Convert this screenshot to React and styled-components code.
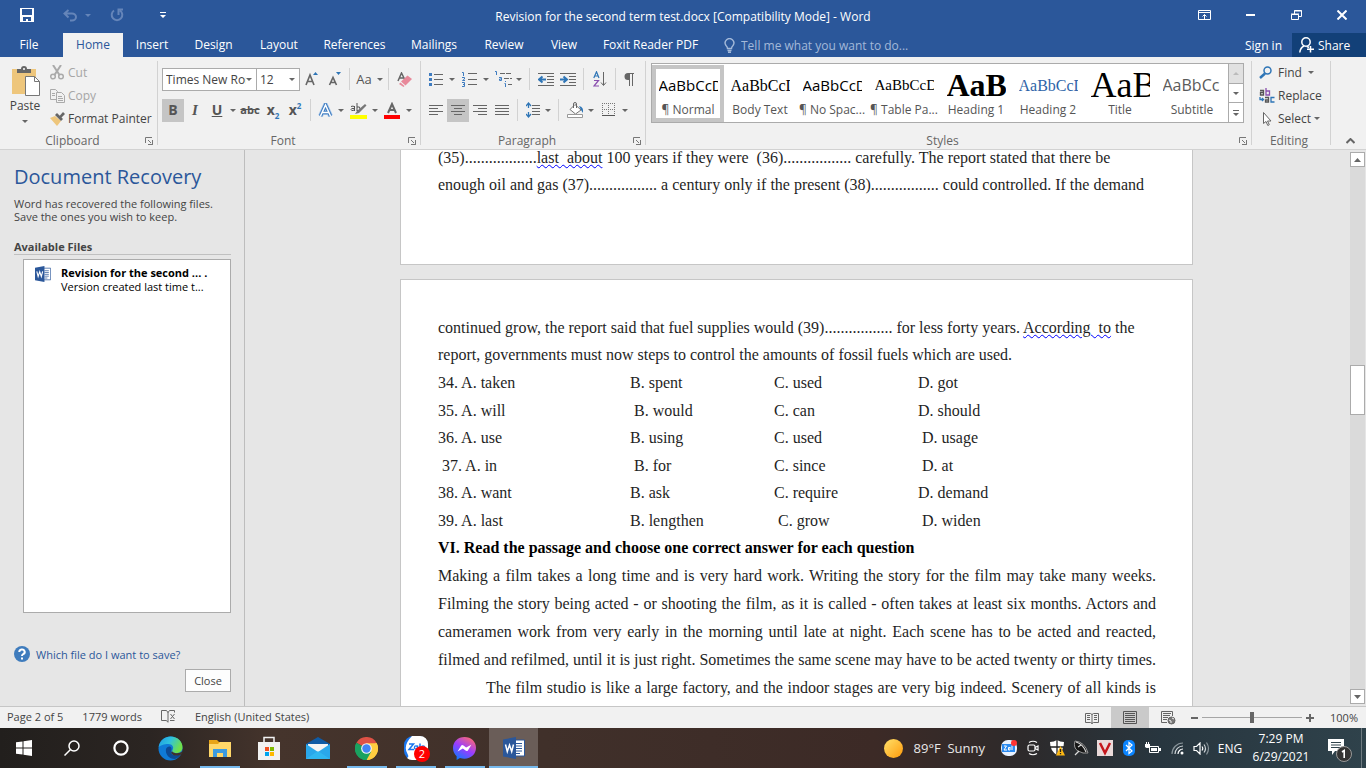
import { useState } from "react";
import styled, { createGlobalStyle, css } from "styled-components";

const GlobalStyle = createGlobalStyle`
  * {
    box-sizing: border-box;
  }
  body {
    margin: 0;
    font-family: "Open Sans", "Noto Sans", sans-serif;
    font-size: 12px;
    color: #444;
  }
  button, input, select {
    font-family: inherit;
    font-size: inherit;
    color: inherit;
  }
  button {
    border: none;
    background: none;
    padding: 0;
  }
  p, h1, h2, h3 {
    margin: 0;
    font-size: inherit;
    font-weight: 400;
  }
  svg {
    display: block;
    flex: none;
  }
`;

const Shell = styled.div`
  height: 100vh;
  display: flex;
  flex-direction: column;
  overflow: hidden;
  background: #e6e6e6;
`;

/* ---------- title bar ---------- */

const TitleBar = styled.header`
  height: 33px;
  display: grid;
  grid-template-columns: 1fr auto 1fr;
  align-items: start;
  background: #2b579a;
  color: #fff;
`;

const QuickAccess = styled.div`
  display: flex;
  align-items: center;
  padding-left: 16px;
  height: 30px;
`;

const QuickButton = styled.button`
  width: ${(props) => props.$w || 22}px;
  height: 24px;
  margin-left: ${(props) => props.$gap || 0}px;
  display: flex;
  align-items: center;
  justify-content: center;
  color: ${(props) => (props.disabled ? "#6585b9" : "#fff")};
`;

const DocTitle = styled.h1`
  line-height: 33px;
  white-space: nowrap;
`;

const WindowButtons = styled.div`
  display: flex;
  justify-content: flex-end;
  padding-right: 1px;
`;

const WindowButton = styled.button`
  width: 46px;
  height: 30px;
  display: flex;
  align-items: center;
  justify-content: center;
  color: #fff;
`;

/* ---------- tabs ---------- */

const TabBar = styled.nav`
  height: 24px;
  display: flex;
  background: #2b579a;
  color: #fff;
`;

const Tab = styled.button`
  width: ${(props) => props.$w}px;
  height: 24px;
  line-height: 24px;
  color: ${(props) => (props.$active ? "#2b579a" : "#fff")};
  background: ${(props) => (props.$active ? "#f1f1f1" : "transparent")};
  margin-left: ${(props) => (props.$active ? 5 : 0)}px;
  white-space: nowrap;
`;

const TellMe = styled.label`
  display: flex;
  align-items: center;
  gap: 6px;
  padding-left: 14px;
  flex: 1;
  color: #a3b9d9;
  input {
    width: 180px;
    border: none;
    padding: 0;
    background: transparent;
    outline: none;
  }
  input::placeholder {
    color: #a3b9d9;
    opacity: 1;
  }
`;

const SignIn = styled.button`
  padding: 0 10px;
  color: #fff;
`;

const Share = styled.button`
  width: 74px;
  display: flex;
  align-items: center;
  gap: 4px;
  padding-left: 7px;
  background: #124078;
  color: #fff;
`;

/* ---------- ribbon ---------- */

const Ribbon = styled.section`
  height: 93px;
  display: flex;
  padding: 4px 0;
  background: #f1f1f1;
  border-bottom: 1px solid #d2d2d2;
`;

const Group = styled.div`
  width: ${(props) => (props.$w ? `${props.$w}px` : "auto")};
  flex: ${(props) => (props.$grow ? "1" : "none")};
  min-width: 0;
  display: flex;
  flex-direction: column;
  border-right: 1px solid #d2d2d2;
`;

const GroupBody = styled.div`
  flex: 1;
  display: flex;
  flex-direction: ${(props) => (props.$column ? "column" : "row")};
  align-items: flex-start;
  gap: ${(props) => (props.$column ? 7 : 0)}px;
  padding: ${(props) => props.$pad || "6px 4px 0"};
`;

const GroupFooter = styled.div`
  height: 8px;
  line-height: 8px;
  display: flex;
  align-items: center;
  padding-right: 4px;
  color: #666;
  span {
    flex: 1;
    text-align: center;
  }
`;

const Row = styled.div`
  height: 24px;
  display: flex;
  align-items: center;
`;

const Tool = styled.button`
  width: ${(props) => props.$w || 22}px;
  height: 23px;
  display: flex;
  align-items: center;
  justify-content: center;
  background: ${(props) => (props.$on ? "#c5c5c5" : "transparent")};
`;

const Rule = styled.span`
  width: ${(props) => props.$w || 10}px;
  height: 22px;
  display: flex;
  justify-content: center;
  &::before {
    content: "";
    width: 1px;
    background: #d2d2d2;
  }
`;

const Combo = styled.label`
  width: ${(props) => props.$w}px;
  height: 23px;
  display: flex;
  align-items: center;
  padding: 0 4px 0 3px;
  background: #fff;
  border: 1px solid #ababab;
  & + & {
    border-left: none;
  }
  select {
    flex: 1;
    min-width: 0;
    appearance: none;
    border: none;
    padding: 0;
    background: transparent;
    outline: none;
    text-overflow: clip;
  }
`;

const PasteButton = styled.button`
  width: 50px;
  padding-top: 4px;
  display: flex;
  flex-direction: column;
  align-items: center;
  span {
    line-height: 18px;
    margin: 1px 0 5px;
  }
`;

const Stack = styled.div`
  display: flex;
  flex-direction: column;
`;

const TextTool = styled.button`
  height: 23px;
  display: flex;
  align-items: center;
  gap: ${(props) => props.$gap || 3}px;
  color: ${(props) => (props.disabled ? "#a6a6a6" : "#444")};
  white-space: nowrap;
`;

const Glyph = styled.span`
  line-height: 20px;
  color: #555;
  font-size: ${(props) => props.$size || 14}px;
  font-weight: ${(props) => (props.$bold ? 700 : 400)};
  font-style: ${(props) => (props.$italic ? "italic" : "normal")};
  font-family: ${(props) => (props.$serif ? '"Liberation Serif", serif' : "inherit")};
  text-decoration: ${(props) => props.$line || "none"};
  sub, sup {
    font-size: 8px;
    line-height: 0;
    color: #2e75b6;
  }
`;

const Gallery = styled.div`
  flex: 1;
  min-width: 0;
  height: 60px;
  display: flex;
  background: #fff;
  border: 1px solid #ababab;
`;

const StyleList = styled.div`
  flex: 1;
  min-width: 0;
  display: flex;
  padding-top: 1px;
  overflow: hidden;
`;

const StyleItem = styled.button`
  flex: 1;
  min-width: 0;
  height: 57px;
  border: 4px solid ${(props) => (props.$on ? "#c5c5c5" : "transparent")};
  display: flex;
  flex-direction: column;
  align-items: center;
  color: #555;
`;

const StyleName = styled.span`
  line-height: 16px;
  white-space: nowrap;
`;

const Preview = styled.span`
  width: 59px;
  height: 33px;
  flex: none;
  line-height: 33px;
  overflow: hidden;
  text-align: left;
  white-space: nowrap;
  font-family: ${(props) => (props.$sans ? '"Open Sans", sans-serif' : '"Liberation Serif", serif')};
  font-size: ${(props) => props.$size}px;
  font-weight: ${(props) => (props.$bold ? 700 : 400)};
  color: ${(props) => props.$color || "#000"};
`;

const GalleryArrows = styled.div`
  width: 15px;
  display: flex;
  flex-direction: column;
  border-left: 1px solid #ababab;
  button {
    flex: 1;
    display: flex;
    align-items: center;
    justify-content: center;
  }
  button + button {
    border-top: 1px solid #ababab;
  }
  button:disabled {
    background: #e1e1e1;
  }
`;

const Collapse = styled.button`
  width: 35px;
  align-self: flex-end;
  height: 8px;
  display: flex;
  align-items: center;
  justify-content: center;
  padding-left: 4px;
`;

/* ---------- workspace ---------- */

const Workspace = styled.main`
  flex: 1;
  min-height: 0;
  display: flex;
`;

const RecoveryPane = styled.aside`
  width: 245px;
  display: flex;
  flex-direction: column;
  padding: 13px 13px 14px 14px;
  border-right: 1px solid #bdbdbd;
  font-size: 11px;
  line-height: 13px;
`;

const PaneTitle = styled.h2`
  font-size: 20px;
  line-height: 28px;
  color: #2b579a;
  margin-bottom: 6px;
`;

const PaneLabel = styled.h3`
  margin-top: 17px;
  font-weight: 700;
  line-height: 14px;
  border-bottom: 1px solid #c0c0c0;
`;

const FileList = styled.ul`
  flex: 1;
  margin: 4px 0 0 9px;
  padding: 6px 0 0 11px;
  list-style: none;
  background: #fff;
  border: 1px solid #ababab;
`;

const FileItem = styled.li`
  display: flex;
  gap: 10px;
  line-height: 14px;
  color: #000;
  white-space: nowrap;
  overflow: hidden;
  strong, span {
    display: block;
  }
`;

const HelpLink = styled.a`
  display: flex;
  align-items: center;
  gap: 6px;
  height: 18px;
  margin-top: 32px;
  color: #2b579a;
  text-decoration: none;
`;

const CloseButton = styled.button`
  align-self: flex-end;
  width: 46px;
  height: 23px;
  margin-top: 6px;
  background: #fdfdfd;
  border: 1px solid #ababab;
`;

const Canvas = styled.div`
  flex: 1;
  min-width: 0;
  display: flex;
  flex-direction: column;
  align-items: center;
  gap: 14px;
  padding-right: 2px;
  overflow: hidden;
  font-family: "Liberation Serif", "Times New Roman", serif;
  font-size: 16px;
  line-height: 27px;
  color: #1f1f1f;
`;

const Paper = styled.article`
  width: 793px;
  max-width: 100%;
  flex: none;
  background: #fff;
  border: 1px solid #c6c6c6;
  padding: ${(props) => props.$pad};
  margin-top: ${(props) => (props.$scrolled ? -7 : 0)}px;
`;

const Line = styled.p`
  white-space: pre;
`;

const Grammar = styled.span`
  text-decoration: underline wavy #00f 1px;
  text-underline-offset: 1px;
`;

const Answers = styled.div`
  padding-top: 1px;
`;

const AnswerRow = styled.div`
  display: grid;
  grid-template-columns: 192px 144px 144px 1fr;
  white-space: pre;
  line-height: 28px;
  &:nth-child(even) {
    line-height: 27px;
  }
`;

const SectionTitle = styled.h3`
  font-weight: 700;
  line-height: 28px;
  color: #000;
`;

const Justified = styled.p`
  line-height: 28px;
  text-align: justify;
  text-align-last: justify;
  padding-left: ${(props) => (props.$indent ? 48 : 0)}px;
`;

const ScrollBar = styled.div`
  width: 15px;
  margin: 2px 1px 2px 0;
  display: flex;
  flex-direction: column;
  background: #dadada;
  button {
    height: 15px;
    display: flex;
    align-items: center;
    justify-content: center;
    background: #fff;
    border: 1px solid #ababab;
  }
`;

const Track = styled.div`
  flex: 1;
  display: flex;
  flex-direction: column;
  &::before {
    content: "";
    flex: 198 0 0;
  }
  &::after {
    content: "";
    flex: 274 0 0;
  }
`;

const Thumb = styled.div`
  height: 50px;
  background: #fff;
  border: 1px solid #ababab;
`;

/* ---------- status bar ---------- */

const StatusBar = styled.footer`
  height: 22px;
  display: flex;
  align-items: center;
  background: #f1f1f1;
  border-top: 1px solid #c6c6c6;
  padding-left: 7px;
  font-size: 11px;
  line-height: 19px;
`;

const StatusText = styled.span`
  height: 21px;
  margin-right: 19px;
  white-space: nowrap;
  svg {
    margin-top: 3px;
  }
`;

const Spacer = styled.div`
  flex: 1;
`;

const ViewButton = styled.button`
  width: 38px;
  height: 21px;
  display: flex;
  align-items: center;
  justify-content: center;
  background: ${(props) => (props.$on ? "#cacaca" : "transparent")};
`;

const ZoomButton = styled.button`
  width: ${(props) => props.$w || 14}px;
  height: 20px;
  display: flex;
  align-items: center;
  justify-content: center;
`;

const ZoomRange = styled.input`
  appearance: none;
  width: 100px;
  height: 12px;
  margin: 0;
  background: linear-gradient(#a6a6a6, #a6a6a6) center / 100% 1px no-repeat;
  &::-webkit-slider-thumb {
    appearance: none;
    width: 4px;
    height: 11px;
    background: #666;
  }
`;

const ZoomText = styled.button`
  width: 49px;
  padding-left: 5px;
`;

/* ---------- taskbar ---------- */

const TaskBar = styled.footer`
  height: 40px;
  display: flex;
  align-items: stretch;
  color: #fff;
  background: linear-gradient(
    90deg,
    #221f1d 0%,
    #2b2522 11%,
    #45342c 20%,
    #40302a 40%,
    #3c2a26 64%,
    #2d2a2b 75%,
    #28363f 85%,
    #2f424b 100%
  );
`;

const Task = styled.button`
  width: ${(props) => props.$w || 49}px;
  display: flex;
  align-items: center;
  justify-content: center;
  position: relative;
  background: ${(props) => (props.$active ? "#6a5d58" : "transparent")};
  ${(props) =>
    props.$running &&
    css`
      &::after {
        content: "";
        position: absolute;
        bottom: 0;
        left: ${props.$active ? 0 : 5}px;
        right: ${props.$active ? 0 : 4}px;
        height: 2px;
        background: #76b9ed;
      }
    `}
`;

const Badge = styled.span`
  position: absolute;
  left: 23px;
  top: 18px;
  width: 16px;
  height: 16px;
  border-radius: 50%;
  background: #f00;
  color: #fff;
  font-size: 11px;
  line-height: 16px;
  text-align: center;
`;

const Weather = styled.button`
  display: flex;
  align-items: center;
  gap: 11px;
  margin-right: 12px;
  color: #e8e8e8;
  font-size: 13px;
  white-space: pre;
`;

const TrayButton = styled.button`
  width: 24px;
  display: flex;
  align-items: center;
  justify-content: center;
`;

const Lang = styled.button`
  width: 34px;
  color: #fff;
`;

const Clock = styled.time`
  width: 68px;
  padding-top: 2px;
  line-height: 18px;
  text-align: center;
  white-space: nowrap;
`;

const Notices = styled.button`
  width: 46px;
  display: flex;
  align-items: center;
  justify-content: center;
  padding: 4px 0 0 3px;
`;

const DesktopEdge = styled.div`
  width: 5px;
  border-left: 1px solid #6f7b81;
`;

/* ---------- drawings ---------- */

const Svg = ({ w = 16, h = 16, children, ...rest }) => (
  <svg width={w} height={h} viewBox={`0 0 ${w} ${h}`} fill="none" aria-hidden="true" {...rest}>
    {children}
  </svg>
);

const Down = ({ color = "#666" }) => (
  <Svg w={6} h={3}>
    <path d="M0 0h6L3 3z" fill={color} />
  </Svg>
);

const Caret = ({ w = 10, label }) => (
  <Tool $w={w} aria-label={label}>
    <Down />
  </Tool>
);

const Launcher = () => (
  <button aria-label="More options">
    <Svg w={8} h={8} stroke="#777">
      <path d="M.5 6V.5H7M3 3l3 3" />
      <path d="M7.500 3v4.500H3M7.500 5v2.500H5" />
    </Svg>
  </button>
);

const Lines = ({ rows }) => (
  <Svg w={14} h={11} stroke="#666">
    {rows.map(([a, b], i) => (
      <path key={i} d={`M${a} ${i * 3 + 0.5}H${b}`} />
    ))}
  </Svg>
);

const WordIcon = ({ size = 16 }) => (
  <svg width={size} height={size} viewBox="0 0 22 22" aria-hidden="true">
    <path d="M11 3h10.500v16H11z" fill="#fff" stroke="#2b579a" />
    <path d="M13 6.500h6M13 9h6M13 11.500h6M13 14h6M13 16.500h4" stroke="#2b579a" />
    <path d="M0 2.500L13 0v22L0 19.500z" fill="#2b579a" />
    <path d="M2.500 7.500l1.800 7 2.200-6.500 2.200 6.500 1.800-7" fill="none" stroke="#fff" strokeWidth="1.500" />
  </svg>
);

const SaveIcon = () => (
  <Svg w={14} h={14}>
    <path d="M0 0h14v14H0z" fill="#fff" />
    <path d="M2 1h10v6H2zM3 9h8v4H8v-2H6v2H3z" fill="#2b579a" />
  </Svg>
);

const UndoIcon = () => (
  <Svg w={15} h={13} stroke="currentColor" strokeWidth="2">
    <path d="M5.500 1L1.500 4.500l4 4M2 4.500h7a4 3.500 0 0 1 0 7H7" />
  </Svg>
);

const RedoIcon = () => (
  <Svg w={14} h={14} stroke="currentColor" strokeWidth="2">
    <path d="M4 2.500A5.300 5.300 0 1 0 10 2.500M8.500 7V1.500H13" />
  </Svg>
);

const PasteIcon = () => (
  <Svg w={29} h={31}>
    <path d="M1 4h24v25H1z" fill="#eec67c" />
    <path d="M6 8V4h4a3 3 0 0 1 6 0h4v4z" fill="#666" />
    <circle cx="13" cy="4" r="1" fill="#fff" />
    <path d="M14.500 11.500h9l5 5v14h-14z" fill="#fff" stroke="#777" />
    <path d="M23.500 11.500v5h5" stroke="#777" />
  </Svg>
);

const CutIcon = () => (
  <Svg w={15} h={15} stroke="#aaa" strokeWidth="1.500">
    <path d="M3 0l6.500 10M11 0L4.500 10" strokeWidth="2" />
    <circle cx="3" cy="11.500" r="2.300" />
    <circle cx="11" cy="11.500" r="2.300" />
  </Svg>
);

const CopyIcon = () => (
  <Svg w={15} h={14} stroke="#aaa">
    <path d="M.5.500h5l2 2v8h-7zM2 4.500h3M2 6.500h3" />
    <path d="M6.500 3.500h5l3 3v7h-8z" fill="#f1f1f1" />
    <path d="M8 7.500h4M8 9.500h5M8 11.500h5" />
  </Svg>
);

const PainterIcon = () => (
  <Svg w={15} h={14}>
    <path d="M0 6l5-2 6 5-4 5z" fill="#eec67c" />
    <path d="M5 3l2-2 6 6-2 2z" fill="#666" />
    <path d="M9.500 4l3.500-4 2 2-4 4z" fill="#666" />
  </Svg>
);

const EraserIcon = () => (
  <Svg w={15} h={15}>
    <path d="M1 9l3.500-8L8 8M2.500 6H7" stroke="#666" strokeWidth="1.500" />
    <path d="M10.500 3.500L15 7l-6.500 6.500L4 9.500z" fill="#e8899a" />
    <path d="M3.500 10.500l4 3.500-1 1L2 12z" fill="#e8899a" />
  </Svg>
);

const SizedA = ({ small }) => (
  <Svg w={14} h={14}>
    <path
      d={small ? "M1.500 13L5 5.500 8.500 13M2.800 10.500h4.500" : "M1 13L5 3l4 10M2.500 9.500h5"}
      stroke="#666"
      strokeWidth="1.600"
    />
    <path d={small ? "M8 0h5l-2.500 3z" : "M8 3h5l-2.500-3z"} fill="#2e75b6" />
  </Svg>
);

const EffectIcon = () => (
  <Svg w={15} h={15}>
    <path d="M2.500 13L7.500 2l5 11M4.500 9.500h6" stroke="#a9c8ea" strokeWidth="5" />
    <path d="M2.500 13L7.500 2l5 11M4.500 9.500h6" stroke="#3f7cc0" strokeWidth="3.500" />
    <path d="M2.500 13L7.500 2l5 11M4.500 9.500h6" stroke="#fff" strokeWidth="1.500" />
  </Svg>
);

const HighlightIcon = () => (
  <Svg w={17} h={17}>
    <path d="M4.500 4v5M1 4.500q3-1.500 3.500 1M4 6.500q-3-.5-3 1.200T4.500 8M7 1v8M7 5q3.500-1 3 2T7 8.500" stroke="#555" />
    <path d="M15 2l1.500 1.500L9 11l-4 1 2-3z" fill="#777" />
    <path d="M0 13h17v4H0z" fill="#ff0" />
  </Svg>
);

const FontColorIcon = () => (
  <Svg w={16} h={17}>
    <path d="M4 11l4-9 4 9M5.500 8h5" stroke="#666" strokeWidth="2" />
    <path d="M0 13h16v4H0z" fill="red" />
  </Svg>
);

const BulletsIcon = () => (
  <Svg w={14} h={15}>
    <path d="M5 2.500h9M5 7.500h9M5 12.500h9" stroke="#666" />
    <path d="M0 1h3v3H0zM0 6h3v3H0zM0 11h3v3H0z" fill="#3f7cc0" />
  </Svg>
);

const NumberingIcon = () => (
  <Svg w={15} h={16}>
    <path d="M6 2.500h9M6 8.500h9M6 13.500h9" stroke="#666" />
    <path d="M0 1.500h1.500V5M0 6.500h2.500v1.500L.5 9.500H3M0 11.500h2.500v4H0M1 13.500h1.500" stroke="#3f7cc0" />
  </Svg>
);

const MultiIcon = () => (
  <Svg w={17} h={16}>
    <path d="M5 2.500h11M9 7.500h8M13 13.500h4" stroke="#666" strokeDasharray="5 1" />
    <path d="M0 .500h1.500V4M4 6.500h2.500V9.500H4.500V8H6M10.500 10v1M9.500 12.500h1V16" stroke="#3f7cc0" />
  </Svg>
);

const IndentIcon = ({ out }) => (
  <Svg w={16} h={13}>
    <path d="M0 .500h16M9 3.500h7M9 6.500h7M9 9.500h7M0 12.500h16" stroke="#666" />
    <path d={out ? "M8 6.500H2M4.500 3.500L1 6.500l3.500 3" : "M0 6.500h6M3.500 3.500L7 6.500l-3.500 3"} stroke="#2e75b6" strokeWidth="2" />
  </Svg>
);

const SortIcon = () => (
  <Svg w={14} h={16}>
    <path d="M.8 7L3.500.8 6 7M1.500 5h4" stroke="#2e75b6" strokeWidth="1.200" />
    <path d="M1 9.500h4.500L1 15h5" stroke="#8a4fae" strokeWidth="1.200" />
    <path d="M10.500 1v13M8 11.500l2.500 3 2.500-3" stroke="#666" />
  </Svg>
);

const PilcrowIcon = () => (
  <Svg w={10} h={13}>
    <path d="M4 0h6v1H9v12H8V1H6v12H5V7H4a3.500 3.500 0 0 1 0-7z" fill="#666" />
  </Svg>
);

const SpacingIcon = () => (
  <Svg w={15} h={16}>
    <path d="M6 3.500h8M6 6.500h8M6 9.500h8M6 12.500h8" stroke="#666" />
    <path d="M2.500 2v4M2.500 10v4M0 4l2.500-3L5 4M0 12l2.500 3L5 12" stroke="#2e75b6" strokeWidth="1.300" />
  </Svg>
);

const ShadingIcon = () => (
  <Svg w={17} h={16}>
    <path d="M8 2.500l6 5.500-5.500 4L3 7.500z" fill="#fff" stroke="#777" />
    <path d="M6.500 6V2a1.500 1.500 0 0 1 3 0v4" stroke="#666" />
    <path d="M12 4q5 1 4 7l-2-3z" fill="#2e75b6" />
    <path d="M.5 12.500h15v3H.5z" fill="#fff" stroke="#999" />
  </Svg>
);

const BordersIcon = () => (
  <Svg w={13} h={14} stroke="#777">
    <path d="M0 .500h13M0 6.500h13M.5 0v13M6.500 0v13M12.500 0v13" strokeDasharray="1 1" />
    <path d="M0 12.500h13" stroke="#555" />
  </Svg>
);

const FindIcon = () => (
  <Svg w={13} h={13} stroke="#2e75b6">
    <circle cx="8.500" cy="4.500" r="3.500" strokeWidth="1.500" />
    <path d="M6 7.500L1 12" strokeWidth="2.500" />
  </Svg>
);

const ReplaceIcon = () => (
  <Svg w={16} h={15}>
    <g strokeWidth="1.300">
      <path d="M1 2.500h3.500V7H1.500V4.500H4.500" stroke="#555" />
      <path d="M7 0v7h3.500V3H7" stroke="#8a4fae" />
      <path d="M6 9.500h3.500V14H6.500v-2H9.500" stroke="#555" />
      <path d="M15.500 9.500H12V14h3.500" stroke="#2e75b6" />
      <path d="M1 9v2.500h3M3 10l1.500 1.500L3 13" stroke="#2e75b6" />
    </g>
  </Svg>
);

const SelectIcon = () => (
  <Svg w={16} h={14}>
    <path d="M4.500.500v11l2.500-2 1.800 4 1.500-.8-1.800-3.700h3.500z" fill="#fff" stroke="#666" />
  </Svg>
);

const BookIcon = () => (
  <Svg w={14} h={12} stroke="#666">
    <path d="M.5 1.500h5l1.500 1 1.500-1h5v9h-5l-1.500 1-1.500-1h-5zM7 2v10M2 3.500h3M2 5.500h3M2 7.500h3M9 3.500h3M9 5.500h3M9 7.500h3" />
  </Svg>
);

const ProofIcon = () => (
  <Svg w={15} h={13} stroke="#666">
    <path d="M7 2.500L5.500.500h-5v10h5L7 12.500M7 2v10M7 2.500L8.500.500h5v2M9 10.500h4.500M9.500 4l4 5M13.500 4l-4 5" />
  </Svg>
);

const PrintViewIcon = () => (
  <Svg w={14} h={13} stroke="#555">
    <path d="M.5.500h13v12H.5zM2 2.500h10M2 4.500h10M2 6.500h10M2 8.500h10M2 10.500h10" />
  </Svg>
);

const WebViewIcon = () => (
  <Svg w={15} h={14} stroke="#666">
    <path d="M6 11.500H.5V.500h11V5M2 2.500h8M2 4.500h7M2 6.500h5M2 8.500h4" />
    <circle cx="10.500" cy="9.500" r="3.500" fill="#777" />
    <path d="M8 9l2 1v2M11 7l2 1" stroke="#f1f1f1" />
  </Svg>
);

const EdgeIcon = () => (
  <svg width="25" height="25" viewBox="0 0 25 25" aria-hidden="true">
    <defs>
      <linearGradient id="edgeTop" x1="0" y1="0" x2="1" y2="0.4">
        <stop offset="0" stopColor="#1f9be0" />
        <stop offset="0.5" stopColor="#2fc2df" />
        <stop offset="1" stopColor="#6fe04a" />
      </linearGradient>
    </defs>
    <circle cx="12.500" cy="12.500" r="12" fill="#0f7ad6" />
    <path d="M.7 11C2 4 7 .5 12.500.500 20 .5 25 6 24.500 12c-.5 4-4 5.500-7.500 5-2.500-.4-3.500-1.500-2.500-3 2-3-.5-6-4-6C6 8 2 9.500.7 11z" fill="url(#edgeTop)" />
    <path d="M8 13c-1 5 3 10 9 10 3-1 5-3 6-5-4 2-9 1.500-10-1-.7-1.500 1-2.500.5-4.500C13 9.500 9 10 8 13z" fill="#0d4a94" />
    <path d="M13 17c2 3 7 3.500 11 1l.5-3c-2 2-5 2.500-7.500 2-2.500-.4-3.500-1.500-2.500-3z" fill="#40312b" />
  </svg>
);

const FolderIcon = () => (
  <Svg w={22} h={19}>
    <path d="M0 1h8l2 2h12v15H0z" fill="#e8a417" />
    <path d="M0 5h9l2-2h11v15H0z" fill="#ffd769" />
    <path d="M4 10h14v8h-4v-4H8v4H4z" fill="#3c9be0" />
  </Svg>
);

const StoreIcon = () => (
  <Svg w={24} h={25}>
    <path d="M7 7V1.500h10V7" stroke="#f2f2f2" strokeWidth="1.500" />
    <path d="M1 6h22v18H1z" fill="#f2f2f2" />
    <path d="M8 11h4v4H8z" fill="#f25022" />
    <path d="M13 11h4v4h-4z" fill="#7fba00" />
    <path d="M8 16h4v4H8z" fill="#00a4ef" />
    <path d="M13 16h4v4h-4z" fill="#ffb900" />
  </Svg>
);

const MailIcon = () => (
  <Svg w={24} h={22}>
    <path d="M0 7l12-7 12 7v4H0z" fill="#0f5ba5" />
    <path d="M2 7h20v8H2z" fill="#f4f4f4" />
    <path d="M0 7l12 8L24 7v15H0z" fill="#2aa7ea" />
    <path d="M0 22l12-8 12 8z" fill="#36c0f4" opacity="0.6" />
  </Svg>
);

const ChromeIcon = () => (
  <svg width="23" height="23" viewBox="0 0 24 24" aria-hidden="true">
    <path d="M12 12L1.600 6A12 12 0 0 1 22.400 6z" fill="#de5246" />
    <path d="M12 12l10.400-6A12 12 0 0 1 12 24z" fill="#ffcd40" />
    <path d="M12 12v12A12 12 0 0 1 1.600 6z" fill="#1aa260" />
    <path d="M12 6.500h10.600A12 12 0 0 1 12 24l4.800-9z" fill="#ffcd40" />
    <path d="M1.600 6A12 12 0 0 0 12 24l5-9-9.800 0z" fill="#1aa260" />
    <circle cx="12" cy="12" r="5.600" fill="#f4f4f4" />
    <circle cx="12" cy="12" r="4.400" fill="#4285f4" />
  </svg>
);

const ZaloIcon = ({ size = 24 }) => (
  <svg width={size} height={size} viewBox="0 0 24 24" aria-hidden="true">
    <rect width="24" height="24" rx="9" fill="#1a76ef" />
    <path d="M8 0h8a8 8 0 0 1 8 8v8a8 8 0 0 1-8 8H8q-3 0-5-2 2-1 1-3-6-9 4-19z" fill="#fff" />
    <path d="M5 8h4.500l-4.500 5.500h5M13.500 13.500v-4M16 7.500v6" fill="none" stroke="#1a76ef" strokeWidth="1.500" />
    <circle cx="12" cy="11.500" r="1.600" fill="none" stroke="#1a76ef" strokeWidth="1.300" />
    <circle cx="19" cy="11.500" r="1.600" fill="none" stroke="#1a76ef" strokeWidth="1.300" />
  </svg>
);

const MessengerIcon = () => (
  <svg width="23" height="23" viewBox="0 0 24 24" aria-hidden="true">
    <defs>
      <linearGradient id="msg" x1="0.2" y1="1" x2="0.8" y2="0">
        <stop offset="0" stopColor="#0a7cff" />
        <stop offset="0.5" stopColor="#9a3cff" />
        <stop offset="1" stopColor="#ff6a70" />
      </linearGradient>
    </defs>
    <path d="M12 0C5 0 0 5 0 11.600c0 3.500 1.400 6.500 3.800 8.500V24l3.500-2q2.200.6 4.700.6c7 0 12-5 12-11.400S19 0 12 0z" fill="url(#msg)" />
    <path d="M4.800 15l3.500-5.600a1.800 1.800 0 0 1 2.600-.5l2.800 2.100 5.500-2.900-3.500 5.600a1.800 1.800 0 0 1-2.600.5l-2.800-2.100z" fill="#fff" />
  </svg>
);

/* ---------- content ---------- */

const tabs = [
  ["File", 58],
  ["Home", 60],
  ["Insert", 58],
  ["Design", 65],
  ["Layout", 66],
  ["References", 85],
  ["Mailings", 74],
  ["Review", 66],
  ["View", 54],
  ["Foxit Reader PDF", 119],
];

const styles = [
  { name: "¶ Normal", text: "AaBbCcD", size: 15, sans: true },
  { name: "Body Text", text: "AaBbCcD", size: 16 },
  { name: "¶ No Spac...", text: "AaBbCcD", size: 15, sans: true },
  { name: "¶ Table Pa...", text: "AaBbCcD", size: 15 },
  { name: "Heading 1", text: "AaB", size: 32, bold: true },
  { name: "Heading 2", text: "AaBbCcD", size: 16, color: "#2e64a8" },
  { name: "Title", text: "AaB", size: 36 },
  { name: "Subtitle", text: "AaBbCc", size: 16, sans: true, color: "#5a5a5a" },
];

const answers = [
  ["34. A. taken", "B. spent", "C. used", "D. got"],
  ["35. A. will", " B. would", "C. can", "D. should"],
  ["36. A. use", "B. using", "C. used", " D. usage"],
  [" 37. A. in", " B. for", "C. since", " D. at"],
  ["38. A. want", "B. ask", "C. require", "D. demand"],
  ["39. A. last", "B. lengthen", " C. grow", " D. widen"],
];

const passage = [
  "Making a film takes a long time and is very hard work. Writing the story for the film may take many weeks.",
  "Filming the story being acted - or shooting the film, as it is called - often takes at least six months. Actors and",
  "cameramen work from very early in the morning until late at night. Each scene has to be acted and reacted,",
  "filmed and refilmed, until it is just right. Sometimes the same scene may have to be acted twenty or thirty times.",
];

function App() {
  const [tab, setTab] = useState("Home");
  const [zoom, setZoom] = useState(50);

  return (
    <Shell>
      <GlobalStyle />
      <TitleBar>
        <QuickAccess>
          <QuickButton aria-label="Save"><SaveIcon /></QuickButton>
          <QuickButton $gap={21} disabled aria-label="Undo"><UndoIcon /></QuickButton>
          <QuickButton $w={10} $gap={2} disabled aria-label="Undo history"><Down color="#6585b9" /></QuickButton>
          <QuickButton $gap={13} disabled aria-label="Redo"><RedoIcon /></QuickButton>
          <QuickButton $gap={24} aria-label="Customize">
            <Svg w={6} h={6}><path d="M0 0h6v1H0zM0 3h6L3 6z" fill="#fff" /></Svg>
          </QuickButton>
        </QuickAccess>
        <DocTitle>Revision for the second term test.docx [Compatibility Mode] - Word</DocTitle>
        <WindowButtons>
          <WindowButton aria-label="Ribbon options">
            <Svg w={13} h={10} stroke="currentColor"><path d="M.5.500h12v9H.5zM0 2.500h13M6.500 9V4.500M4.500 6.500l2-2 2 2" /></Svg>
          </WindowButton>
          <WindowButton aria-label="Minimize">
            <Svg w={9} h={2}><path d="M0 0h9v2H0z" fill="#fff" /></Svg>
          </WindowButton>
          <WindowButton aria-label="Restore">
            <Svg w={11} h={10} stroke="currentColor"><path d="M.5 4.500h7v5h-7zM0 4h8M3.500 4V.500h7v6H8M3 1h8" /></Svg>
          </WindowButton>
          <WindowButton aria-label="Close window">
            <Svg w={10} h={10} stroke="currentColor" strokeWidth="2"><path d="M.5.500l9 9M9.500.500l-9 9" /></Svg>
          </WindowButton>
        </WindowButtons>
      </TitleBar>

      <TabBar>
        {tabs.map(([name, w]) => (
          <Tab key={name} $w={w} $active={name === tab} onClick={() => setTab(name)}>
            {name}
          </Tab>
        ))}
        <TellMe>
          <Svg w={11} h={15} stroke="currentColor" strokeWidth="1.400">
            <path d="M3.500 10.500Q3.500 9 2 7.500a4.300 4.300 0 1 1 7 0Q7.500 9 7.500 10.500zM3.500 12.500h4M4 14.300h3" />
          </Svg>
          <input type="text" placeholder="Tell me what you want to do..." aria-label="Tell me what you want to do" />
        </TellMe>
        <SignIn>Sign in</SignIn>
        <Share>
          <Svg w={15} h={16} stroke="currentColor" strokeWidth="1.500">
            <circle cx="7" cy="5" r="4.200" />
            <path d="M.8 15.500q.5-5 4.500-6.500M8 9.500l2 1M11.500 9v6.500M8 12.200h7" />
          </Svg>
          Share
        </Share>
      </TabBar>

      <Ribbon>
        <Group $w={158}>
          <GroupBody $pad="0">
            <PasteButton>
              <PasteIcon />
              <span>Paste</span>
              <Down />
            </PasteButton>
            <Stack>
              <TextTool disabled><CutIcon />Cut</TextTool>
              <TextTool disabled><CopyIcon />Copy</TextTool>
              <TextTool><PainterIcon />Format Painter</TextTool>
            </Stack>
          </GroupBody>
          <GroupFooter><span>Clipboard</span><Launcher /></GroupFooter>
        </Group>

        <Group $w={263}>
          <GroupBody $column>
            <Row>
              <Combo $w={95}>
                <select aria-label="Font"><option>Times New Roman</option></select>
                <Down />
              </Combo>
              <Combo $w={43}>
                <select aria-label="Font size"><option>12</option></select>
                <Down />
              </Combo>
              <Tool $w={24} aria-label="Grow font"><SizedA /></Tool>
              <Tool aria-label="Shrink font"><SizedA small /></Tool>
              <Rule $w={6} />
              <Tool $w={24}><Glyph $size={13}>Aa</Glyph></Tool>
              <Caret w={8} label="Case options" />
              <Rule $w={8} />
              <Tool $w={24} aria-label="Clear formatting"><EraserIcon /></Tool>
            </Row>
            <Row>
              <Tool $on><Glyph $bold>B</Glyph></Tool>
              <Tool><Glyph $italic $serif $bold $size={15}>I</Glyph></Tool>
              <Tool><Glyph $bold $line="underline">U</Glyph></Tool>
              <Caret label="Underline options" />
              <Tool $w={24}><Glyph $size={11} $bold $line="line-through">abc</Glyph></Tool>
              <Tool><Glyph $bold>x<sub>2</sub></Glyph></Tool>
              <Tool><Glyph $bold>x<sup>2</sup></Glyph></Tool>
              <Rule $w={8} />
              <Tool aria-label="Text effects"><EffectIcon /></Tool>
              <Caret label="Effect options" />
              <Tool $w={24} aria-label="Highlight"><HighlightIcon /></Tool>
              <Caret label="Highlight options" />
              <Tool $w={24} aria-label="Font color"><FontColorIcon /></Tool>
              <Caret label="Font color options" />
            </Row>
          </GroupBody>
          <GroupFooter><span>Font</span><Launcher /></GroupFooter>
        </Group>

        <Group $w={225}>
          <GroupBody $column>
            <Row>
              <Tool aria-label="Bullets"><BulletsIcon /></Tool>
              <Caret label="Bullet options" />
              <Tool $w={24} aria-label="Numbering"><NumberingIcon /></Tool>
              <Caret label="Numbering options" />
              <Tool $w={24} aria-label="Multilevel list"><MultiIcon /></Tool>
              <Caret w={8} label="Multilevel options" />
              <Rule $w={12} />
              <Tool aria-label="Decrease indent"><IndentIcon out /></Tool>
              <Tool aria-label="Increase indent"><IndentIcon /></Tool>
              <Rule $w={8} />
              <Tool $w={26} aria-label="Sort"><SortIcon /></Tool>
              <Rule $w={4} />
              <Tool $w={24} aria-label="Show marks"><PilcrowIcon /></Tool>
            </Row>
            <Row>
              <Tool aria-label="Align left"><Lines rows={[[0, 14], [0, 9], [0, 14], [0, 9]]} /></Tool>
              <Tool $on aria-label="Center"><Lines rows={[[0, 14], [3, 11], [0, 14], [3, 11]]} /></Tool>
              <Tool aria-label="Align right"><Lines rows={[[0, 14], [5, 14], [0, 14], [5, 14]]} /></Tool>
              <Tool aria-label="Justify"><Lines rows={[[0, 14], [0, 14], [0, 14], [0, 14]]} /></Tool>
              <Rule $w={8} />
              <Tool $w={24} aria-label="Line spacing"><SpacingIcon /></Tool>
              <Caret w={6} label="Spacing options" />
              <Rule $w={14} />
              <Tool $w={20} aria-label="Shading"><ShadingIcon /></Tool>
              <Caret w={12} label="Shading options" />
              <Tool aria-label="Borders"><BordersIcon /></Tool>
              <Caret w={12} label="Border options" />
            </Row>
          </GroupBody>
          <GroupFooter><span>Paragraph</span><Launcher /></GroupFooter>
        </Group>

        <Group $grow>
          <GroupBody $pad="2px 7px 0 5px">
            <Gallery>
              <StyleList>
                {styles.map((s, i) => (
                  <StyleItem key={s.name} $on={i === 0}>
                    <Preview $size={s.size} $sans={s.sans} $bold={s.bold} $color={s.color}>{s.text}</Preview>
                    <StyleName>{s.name}</StyleName>
                  </StyleItem>
                ))}
              </StyleList>
              <GalleryArrows>
                <button disabled aria-label="Previous styles">
                  <Svg w={6} h={3}><path d="M0 3h6L3 0z" fill="#bbb" /></Svg>
                </button>
                <button aria-label="Next styles"><Down /></button>
                <button aria-label="All styles">
                  <Svg w={6} h={6}><path d="M0 0h6v1H0zM0 3h6L3 6z" fill="#666" /></Svg>
                </button>
              </GalleryArrows>
            </Gallery>
          </GroupBody>
          <GroupFooter><span>Styles</span><Launcher /></GroupFooter>
        </Group>

        <Group $w={79}>
          <GroupBody $pad="0 0 0 7px">
            <Stack>
              <TextTool $gap={6}><FindIcon />Find<Down /></TextTool>
              <TextTool><ReplaceIcon />Replace</TextTool>
              <TextTool><SelectIcon />Select<Down /></TextTool>
            </Stack>
          </GroupBody>
          <GroupFooter><span>Editing</span></GroupFooter>
        </Group>
        <Collapse aria-label="Collapse ribbon">
          <Svg w={9} h={6} stroke="#666" strokeWidth="2"><path d="M.5 5l4-4 4 4" /></Svg>
        </Collapse>
      </Ribbon>

      <Workspace>
        <RecoveryPane>
          <PaneTitle>Document Recovery</PaneTitle>
          <p>Word has recovered the following files.</p>
          <p>Save the ones you wish to keep.</p>
          <PaneLabel>Available Files</PaneLabel>
          <FileList>
            <FileItem>
              <WordIcon />
              <div>
                <strong>Revision for the second ... .</strong>
                <span>Version created last time t...</span>
              </div>
            </FileItem>
          </FileList>
          <HelpLink href="#help">
            <Svg>
              <circle cx="8" cy="8" r="8" fill="#3f7cbd" />
              <path d="M5.300 6a2.700 2.400 0 1 1 4 2Q8 8.800 8 10M8 11.500v2" stroke="#fff" strokeWidth="2" />
            </Svg>
            Which file do I want to save?
          </HelpLink>
          <CloseButton>Close</CloseButton>
        </RecoveryPane>

        <Canvas>
          <Paper $scrolled $pad="0 36px 66px 37px">
            <Line>(35)..................<Grammar>last  about</Grammar> 100 years if they were  (36)................. carefully. The report stated that there be</Line>
            <Line>enough oil and gas (37)................. a century only if the present (38)................. could controlled. If the demand</Line>
          </Paper>
          <Paper $pad="34px 36px 40px 37px">
            <Line>continued grow, the report said that fuel supplies would (39)................. for less forty years. <Grammar>According  to</Grammar> the</Line>
            <Line>report, governments must now steps to control the amounts of fossil fuels which are used.</Line>
            <Answers>
              {answers.map((row) => (
                <AnswerRow key={row[0]}>
                  {row.map((cell) => <span key={cell}>{cell}</span>)}
                </AnswerRow>
              ))}
            </Answers>
            <SectionTitle>VI. Read the passage and choose one correct answer for each question</SectionTitle>
            {passage.map((text) => <Justified key={text}>{text}</Justified>)}
            <Justified $indent>
              The film studio is like a large factory, and the indoor stages are very big indeed. Scenery of all kinds is
            </Justified>
          </Paper>
        </Canvas>

        <ScrollBar>
          <button aria-label="Scroll up"><Svg w={7} h={4}><path d="M0 4h7L3.500 0z" fill="#666" /></Svg></button>
          <Track><Thumb /></Track>
          <button aria-label="Scroll down"><Svg w={7} h={4}><path d="M0 0h7L3.500 4z" fill="#666" /></Svg></button>
        </ScrollBar>
      </Workspace>

      <StatusBar>
        <StatusText>Page 2 of 5</StatusText>
        <StatusText>1779 words</StatusText>
        <StatusText><ProofIcon /></StatusText>
        <StatusText>English (United States)</StatusText>
        <Spacer />
        <ViewButton aria-label="Read mode"><BookIcon /></ViewButton>
        <ViewButton $on aria-label="Print layout"><PrintViewIcon /></ViewButton>
        <ViewButton aria-label="Web layout"><WebViewIcon /></ViewButton>
        <ZoomButton $w={15} aria-label="Zoom out"><Svg w={7} h={2}><path d="M0 0h7v2H0z" fill="#666" /></Svg></ZoomButton>
        <ZoomRange type="range" aria-label="Zoom" value={zoom} onChange={(e) => setZoom(Number(e.target.value))} />
        <ZoomButton $w={15} aria-label="Zoom in"><Svg w={8} h={8}><path d="M0 3h8v2H0zM3 0h2v8H3z" fill="#666" /></Svg></ZoomButton>
        <ZoomText>100%</ZoomText>
      </StatusBar>

      <TaskBar>
        <Task $w={48} aria-label="Start">
          <Svg w={16} h={16}><path d="M0 2.300L6.500 1.400V7.500H0zM7.500 1.200L16 0v7.500H7.500zM0 8.500h6.500v6.100L0 13.700zM7.500 8.500H16V16l-8.500-1.200z" fill="#fff" /></Svg>
        </Task>
        <Task $w={48} aria-label="Search">
          <Svg w={16} h={16} stroke="#fff" strokeWidth="1.500"><circle cx="10" cy="6" r="5" /><path d="M6.500 9.500L.5 15.500" /></Svg>
        </Task>
        <Task $w={50} aria-label="Cortana">
          <Svg w={16} h={16} stroke="#fff" strokeWidth="2.200"><circle cx="8" cy="8" r="6.600" /></Svg>
        </Task>
        <Task aria-label="Edge"><EdgeIcon /></Task>
        <Task $running aria-label="File Explorer"><FolderIcon /></Task>
        <Task aria-label="Store"><StoreIcon /></Task>
        <Task aria-label="Mail"><MailIcon /></Task>
        <Task $running aria-label="Chrome"><ChromeIcon /></Task>
        <Task $running aria-label="Zalo"><ZaloIcon /><Badge>2</Badge></Task>
        <Task $running aria-label="Messenger"><MessengerIcon /></Task>
        <Task $running $active aria-label="Word"><WordIcon size={22} /></Task>
        <Spacer />
        <Weather>
          <svg width="19" height="19" viewBox="0 0 19 19" aria-hidden="true">
            <defs>
              <linearGradient id="sun" x1="0" y1="0" x2="1" y2="1">
                <stop offset="0" stopColor="#ffe16b" />
                <stop offset="1" stopColor="#ff9a0a" />
              </linearGradient>
            </defs>
            <circle cx="9.500" cy="9.500" r="9.500" fill="url(#sun)" />
          </svg>
          {"89°F  Sunny"}
        </Weather>
        <TrayButton aria-label="Zalo tray">
          <Svg>
            <rect width="16" height="16" rx="7" fill="#e8f1ff" />
            <path d="M1 4h13v8H1z" fill="#2a8af0" />
            <path d="M3 6h2.500L3 10h3M9 7v3H7.500V7.500H9M11 5.500V10" stroke="#fff" />
            <circle cx="13" cy="3" r="3" fill="#f33" />
          </Svg>
        </TrayButton>
        <TrayButton aria-label="Meet now">
          <Svg w={12} h={16} stroke="#fff" strokeWidth="1.200"><path d="M2 2.500q4-2.500 8 0M2 13.500q4 2.500 8 0" /><rect x="1" y="5" width="7" height="6" rx="1.500" /><path d="M8 7.500l3-1.500v4L8 8.500" /></Svg>
        </TrayButton>
        <TrayButton aria-label="Security">
          <Svg>
            <path d="M1 2q4 0 7-2 3 2 7 2 0 9-7 13Q1 11 1 2z" fill="#fff" />
            <path d="M8 0v15M1 7h14" stroke="#222" strokeWidth="1.300" />
            <path d="M11.500 6l4.500 9.500H7z" fill="#fdb813" />
            <path d="M11.500 9v3M11.500 13v1.300" stroke="#222" strokeWidth="1.300" />
          </Svg>
        </TrayButton>
        <TrayButton aria-label="Dish">
          <Svg>
            <path d="M2 1Q0 8 5 11t10 2Q12 2 2 1z" fill="#151515" stroke="#999" />
            <path d="M3 2q7 2 10 10M5 7l3-2M6 11l-4 4" stroke="#ddd" strokeWidth="1.200" />
          </Svg>
        </TrayButton>
        <TrayButton aria-label="Vietnamese keyboard">
          <Svg><path d="M0 0h16v16H0z" fill="#eadada" /><path d="M3 3l5 10 5-10" stroke="#c4161c" strokeWidth="2.500" /></Svg>
        </TrayButton>
        <TrayButton aria-label="Bluetooth">
          <Svg w={12} h={16}><rect width="12" height="16" rx="5" fill="#0a84ff" /><path d="M3 5l6 6-3 2.500v-11L9 5l-6 6" stroke="#fff" strokeWidth="1.200" /></Svg>
        </TrayButton>
        <TrayButton aria-label="Battery">
          <Svg w={16} h={12}><path d="M4.500 4.500h9v6h-9z" stroke="#fff" /><path d="M6 6h6v3H6zM14 6h2v3h-2zM0 2h5v3L3.500 6h-2L0 5zM1 0h1v2H1zM3 0h1v2H3z" fill="#fff" /></Svg>
        </TrayButton>
        <TrayButton aria-label="Wi-Fi">
          <Svg w={13} h={13} strokeWidth="1.200"><path d="M1 12A11 11 0 0 1 12 1" stroke="#89949a" /><path d="M4 12a8 8 0 0 1 8-8" stroke="#cfd5d8" /><path d="M7 12a5 5 0 0 1 5-5" stroke="#fff" /><circle cx="11" cy="11" r="1.500" fill="#fff" /></Svg>
        </TrayButton>
        <TrayButton aria-label="Volume">
          <Svg w={17} h={13} strokeWidth="1.200"><path d="M1 4.500h2.500L7 1v11L3.500 8.500H1zM9 4.500q1.500 2 0 4" stroke="#fff" /><path d="M11 2.500q3 4 0 8" stroke="#cfd5d8" /><path d="M13.500.500q4 6 0 12" stroke="#89949a" /></Svg>
        </TrayButton>
        <Lang>ENG</Lang>
        <Clock>7:29 PM<br />6/29/2021</Clock>
        <Notices aria-label="Notifications">
          <Svg w={26} h={24}>
            <path d="M1 1h16v12H8l-3 4v-4H1z" fill="#fff" />
            <path d="M4 4.500h10M4 7h10M4 9.500h10" stroke="#2f424b" />
            <circle cx="17" cy="16" r="7.500" fill="#333" stroke="#999" />
            <path d="M15 14l2.200-1.500V20" stroke="#fff" strokeWidth="1.600" />
          </Svg>
        </Notices>
        <DesktopEdge />
      </TaskBar>
    </Shell>
  );
}

export default App;
